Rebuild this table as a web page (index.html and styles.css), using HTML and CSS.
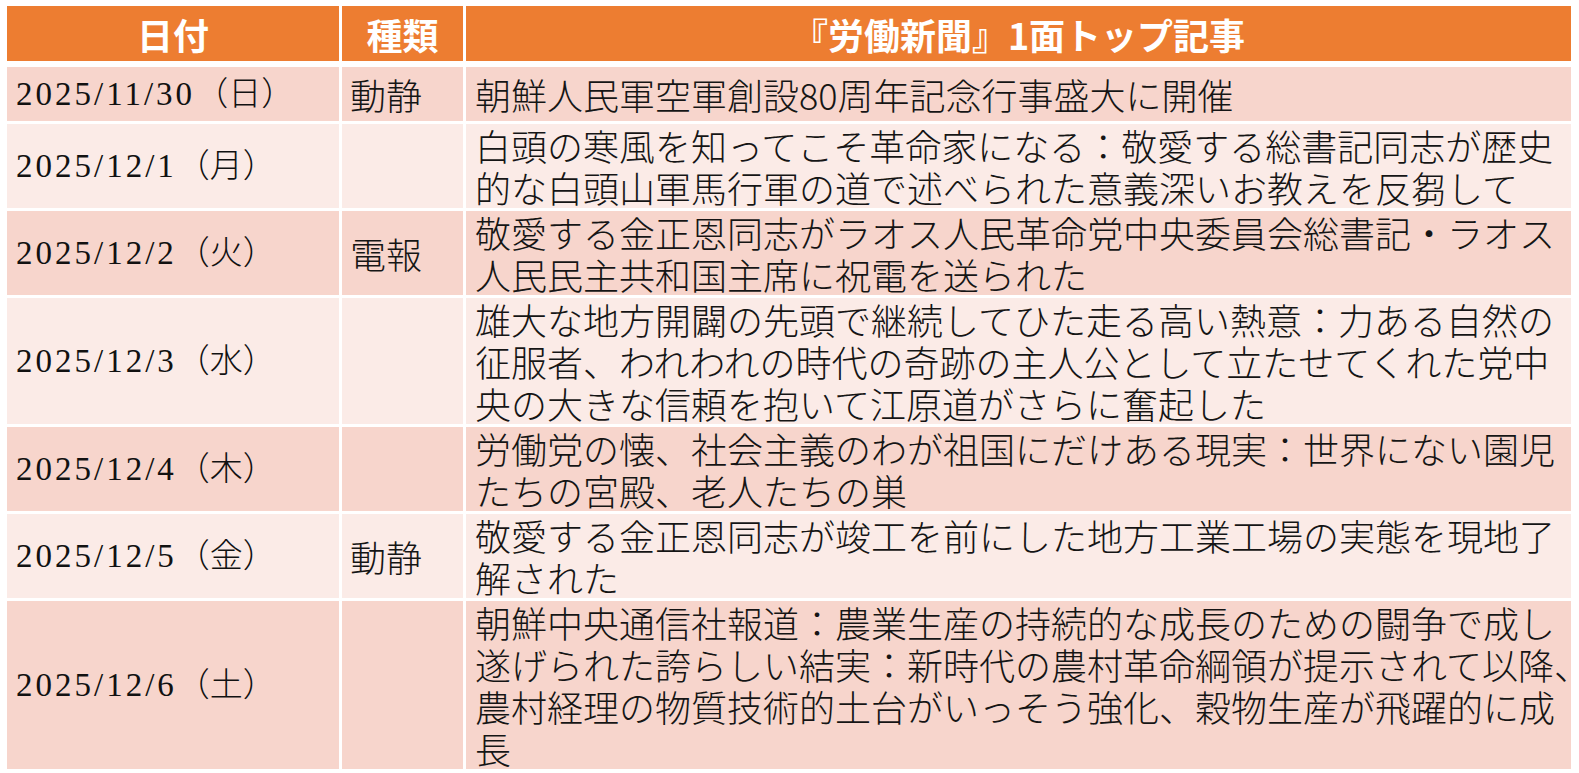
FILE: index.html
```html
<!DOCTYPE html>
<html lang="ja">
<head>
<meta charset="utf-8">
<title>労働新聞 1面トップ記事</title>
<link rel="stylesheet" href="styles.css">
</head>
<body>
<div class="sheet">
  <div class="row head">
    <div class="cell"><div class="txt">日付</div></div>
    <div class="cell"><div class="txt">種類</div></div>
    <div class="cell"><div class="txt">『労働新聞』1面トップ記事</div></div>
  </div>
  <div class="row dark single">
    <div class="cell date"><div class="txt"><span class="num">2025/11/30</span>（日）</div></div>
    <div class="cell kind"><div class="txt">動静</div></div>
    <div class="cell title"><div class="txt">朝鮮人民軍空軍創設80周年記念行事盛大に開催</div></div>
  </div>
  <div class="row light">
    <div class="cell date"><div class="txt"><span class="num">2025/12/1</span>（月）</div></div>
    <div class="cell kind"></div>
    <div class="cell title"><div class="txt">白頭の寒風を知ってこそ革命家になる：敬愛する総書記同志が歴史<br>的な白頭山軍馬行軍の道で述べられた意義深いお教えを反芻して</div></div>
  </div>
  <div class="row dark">
    <div class="cell date"><div class="txt"><span class="num">2025/12/2</span>（火）</div></div>
    <div class="cell kind"><div class="txt">電報</div></div>
    <div class="cell title"><div class="txt">敬愛する金正恩同志がラオス人民革命党中央委員会総書記・ラオス<br>人民民主共和国主席に祝電を送られた</div></div>
  </div>
  <div class="row light">
    <div class="cell date"><div class="txt"><span class="num">2025/12/3</span>（水）</div></div>
    <div class="cell kind"></div>
    <div class="cell title"><div class="txt">雄大な地方開闢の先頭で継続してひた走る高い熱意：力ある自然の<br>征服者、われわれの時代の奇跡の主人公として立たせてくれた党中<br>央の大きな信頼を抱いて江原道がさらに奮起した</div></div>
  </div>
  <div class="row dark">
    <div class="cell date"><div class="txt"><span class="num">2025/12/4</span>（木）</div></div>
    <div class="cell kind"></div>
    <div class="cell title"><div class="txt">労働党の懐、社会主義のわが祖国にだけある現実：世界にない園児<br>たちの宮殿、老人たちの巣</div></div>
  </div>
  <div class="row light">
    <div class="cell date"><div class="txt"><span class="num">2025/12/5</span>（金）</div></div>
    <div class="cell kind"><div class="txt">動静</div></div>
    <div class="cell title"><div class="txt">敬愛する金正恩同志が竣工を前にした地方工業工場の実態を現地了<br>解された</div></div>
  </div>
  <div class="row dark">
    <div class="cell date"><div class="txt"><span class="num">2025/12/6</span>（土）</div></div>
    <div class="cell kind"></div>
    <div class="cell title"><div class="txt">朝鮮中央通信社報道：農業生産の持続的な成長のための闘争で成し<br>遂げられた誇らしい結実：新時代の農村革命綱領が提示されて以降<span class="trim">、</span><br>農村経理の物質技術的土台がいっそう強化、穀物生産が飛躍的に成<br>長</div></div>
  </div>
</div>
</body>
</html>
```

FILE: styles.css
```css
html, body {
  margin: 0;
  padding: 0;
  background: #ffffff;
  overflow: hidden;
}

body {
  font-family: "Noto Sans CJK JP", "Noto Sans", sans-serif;
  color: #151515;
}

.sheet {
  display: grid;
  grid-template-columns: 332px 121px 1105px;
  column-gap: 3px;
  row-gap: 3px;
  margin: 6px 8px 0 7px;
}

.row {
  display: contents;
}

.cell {
  display: flex;
  align-items: center;
  min-width: 0;
}

.txt {
  white-space: nowrap;
}

.head .cell {
  height: 55px;
  margin-bottom: 3px;
  justify-content: center;
  background: #ed7d31;
  color: #ffffff;
  font-weight: 700;
  font-size: 36px;
  line-height: 42px;
}

.dark .cell {
  background: #f7d5cc;
}

.light .cell {
  background: #fbebe7;
}

.single .cell {
  min-height: 54px;
}

.date {
  padding-left: 9px;
  font-size: 33px;
  line-height: 42px;
  font-weight: 300;
  font-family: "Liberation Serif", "Noto Sans CJK JP", serif;
  color: #111111;
}

.num {
  letter-spacing: 3px;
}

.kind {
  padding-left: 8px;
  font-size: 36px;
  line-height: 42px;
  font-weight: 300;
}

.title {
  padding-left: 9px;
  font-size: 36px;
  line-height: 42px;
  font-weight: 300;
}

.trim {
  letter-spacing: -18px;
}
```
